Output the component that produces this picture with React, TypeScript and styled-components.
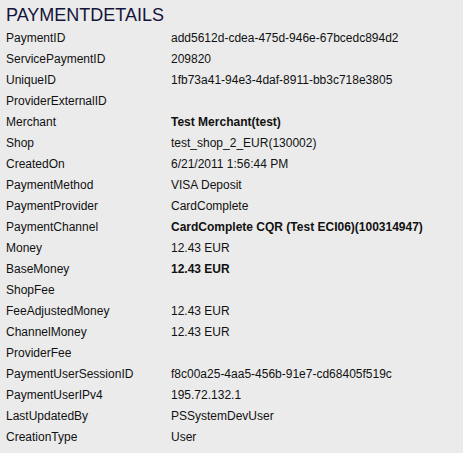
import React from "react";
import styled, { createGlobalStyle } from "styled-components";

const Global = createGlobalStyle`
  html, body { margin: 0; padding: 0; background: #ebebeb; }
  body { font-family: Arial, "Liberation Sans", sans-serif; color: #111; }
`;

const Panel = styled.div`
  padding: 4px 6px 0 6px;
`;

const Title = styled.h2`
  margin: 0 0 1px 0;
  font-size: 18px;
  font-weight: normal;
  color: #14143a;
  line-height: 22px;
`;

const Grid = styled.div`
  display: grid;
  grid-template-columns: 165px 1fr;
  grid-auto-rows: 21px;
  align-items: center;
  font-size: 12px;
`;

const Label = styled.div`
  color: #111;
`;

const Value = styled.div<{ $bold?: boolean }>`
  color: #111;
  font-weight: ${(p) => (p.$bold ? "bold" : "normal")};
`;

const rows: [string, string, boolean?][] = [
  ["PaymentID", "add5612d-cdea-475d-946e-67bcedc894d2"],
  ["ServicePaymentID", "209820"],
  ["UniqueID", "1fb73a41-94e3-4daf-8911-bb3c718e3805"],
  ["ProviderExternalID", ""],
  ["Merchant", "Test Merchant(test)", true],
  ["Shop", "test_shop_2_EUR(130002)"],
  ["CreatedOn", "6/21/2011 1:56:44 PM"],
  ["PaymentMethod", "VISA Deposit"],
  ["PaymentProvider", "CardComplete"],
  ["PaymentChannel", "CardComplete CQR (Test ECI06)(100314947)", true],
  ["Money", "12.43 EUR"],
  ["BaseMoney", "12.43 EUR", true],
  ["ShopFee", ""],
  ["FeeAdjustedMoney", "12.43 EUR"],
  ["ChannelMoney", "12.43 EUR"],
  ["ProviderFee", ""],
  ["PaymentUserSessionID", "f8c00a25-4aa5-456b-91e7-cd68405f519c"],
  ["PaymentUserIPv4", "195.72.132.1"],
  ["LastUpdatedBy", "PSSystemDevUser"],
  ["CreationType", "User"],
];

export default function App() {
  return (
    <>
      <Global />
      <Panel>
        <Title>PAYMENTDETAILS</Title>
        <Grid>
          {rows.map(([k, v, b]) => (
            <React.Fragment key={k}>
              <Label>{k}</Label>
              <Value $bold={b}>{v}</Value>
            </React.Fragment>
          ))}
        </Grid>
      </Panel>
    </>
  );
}
